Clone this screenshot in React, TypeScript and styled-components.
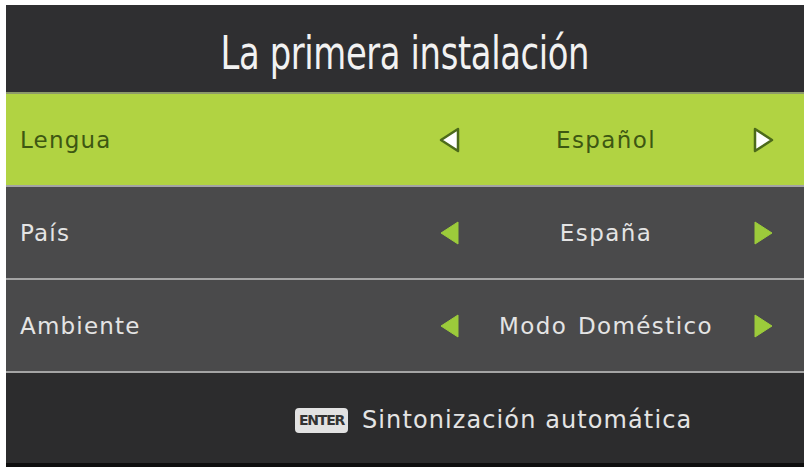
import styled, { createGlobalStyle } from "styled-components";

const GlobalStyle = createGlobalStyle`
  html, body {
    margin: 0;
    padding: 0;
    background: #ffffff;
  }
  body {
    font-family: "DejaVu Sans", "Liberation Sans", sans-serif;
  }
`;

const Screen = styled.div`
  width: 798px;
  margin: 5px 6px 0 6px;
  display: flex;
  flex-direction: column;
  background: #2d2d2e;
`;

const Header = styled.div`
  height: 87px;
  display: flex;
  align-items: center;
  justify-content: center;
  background: #2f2f31;
`;

const Title = styled.h1`
  margin: 0;
  font-family: "DejaVu Sans", sans-serif;
  font-weight: normal;
  font-size: 46px;
  color: #f2f2f2;
  letter-spacing: -0.5px;
  transform: translateY(4px) scaleX(0.735);
  white-space: nowrap;
`;

const Row = styled.div<{ $active?: boolean }>`
  height: 91px;
  border-top: 2px solid ${(p) => (p.$active ? "#8d9a6a" : "#a4a4a4")};
  display: grid;
  grid-template-columns: 1fr 38px 276px 38px;
  align-items: center;
  padding: 0 22px 0 14px;
  background: ${(p) => (p.$active ? "#b1d342" : "#4a4a4b")};
  color: ${(p) => (p.$active ? "#3d5712" : "#e4e4e4")};
`;

const Label = styled.span`
  font-size: 23px;
  letter-spacing: 1.2px;
`;

const Value = styled.span`
  font-size: 23px;
  letter-spacing: 1.4px;
  word-spacing: 2px;
  text-align: center;
`;

const ArrowBox = styled.span`
  display: flex;
  align-items: center;
  justify-content: center;
`;

const Footer = styled.div`
  height: 96px;
  box-sizing: border-box;
  border-top: 2px solid #a4a4a4;
  border-bottom: 4px solid #0e0e0e;
  display: flex;
  align-items: center;
  gap: 14px;
  padding: 4px 0 0 289px;
  background: #2c2c2d;
`;

const EnterKey = styled.span`
  display: inline-flex;
  align-items: center;
  justify-content: center;
  width: 53px;
  height: 25px;
  border-radius: 4px;
  background: #e2e2e2;
  color: #333333;
  font-family: "DejaVu Sans", sans-serif;
  font-weight: bold;
  font-size: 14px;
  letter-spacing: -1.2px;
`;

const FooterText = styled.span`
  font-size: 24px;
  letter-spacing: 1.1px;
  color: #e4e4e4;
`;

function Arrow({ dir, active }: { dir: "left" | "right"; active?: boolean }) {
  const points = dir === "left" ? "20,2 3,13 20,24" : "3,2 20,13 3,24";
  return (
    <ArrowBox>
      <svg width="23" height="26" viewBox="0 0 23 26">
        <polygon
          points={points}
          fill={active ? "#ffffff" : "#9ccb3b"}
          stroke={active ? "#4c6a1a" : "#9ccb3b"}
          strokeWidth={active ? 2.5 : 1}
          strokeLinejoin="round"
        />
      </svg>
    </ArrowBox>
  );
}

const options = [
  { label: "Lengua", value: "Español", active: true },
  { label: "País", value: "España" },
  { label: "Ambiente", value: "Modo Doméstico" },
];

function App() {
  return (
    <>
      <GlobalStyle />
      <Screen>
        <Header>
          <Title>La primera instalación</Title>
        </Header>
        {options.map((o) => (
          <Row key={o.label} $active={o.active}>
            <Label>{o.label}</Label>
            <Arrow dir="left" active={o.active} />
            <Value>{o.value}</Value>
            <Arrow dir="right" active={o.active} />
          </Row>
        ))}
        <Footer>
          <EnterKey>ENTER</EnterKey>
          <FooterText>Sintonización automática</FooterText>
        </Footer>
      </Screen>
    </>
  );
}

export default App;
